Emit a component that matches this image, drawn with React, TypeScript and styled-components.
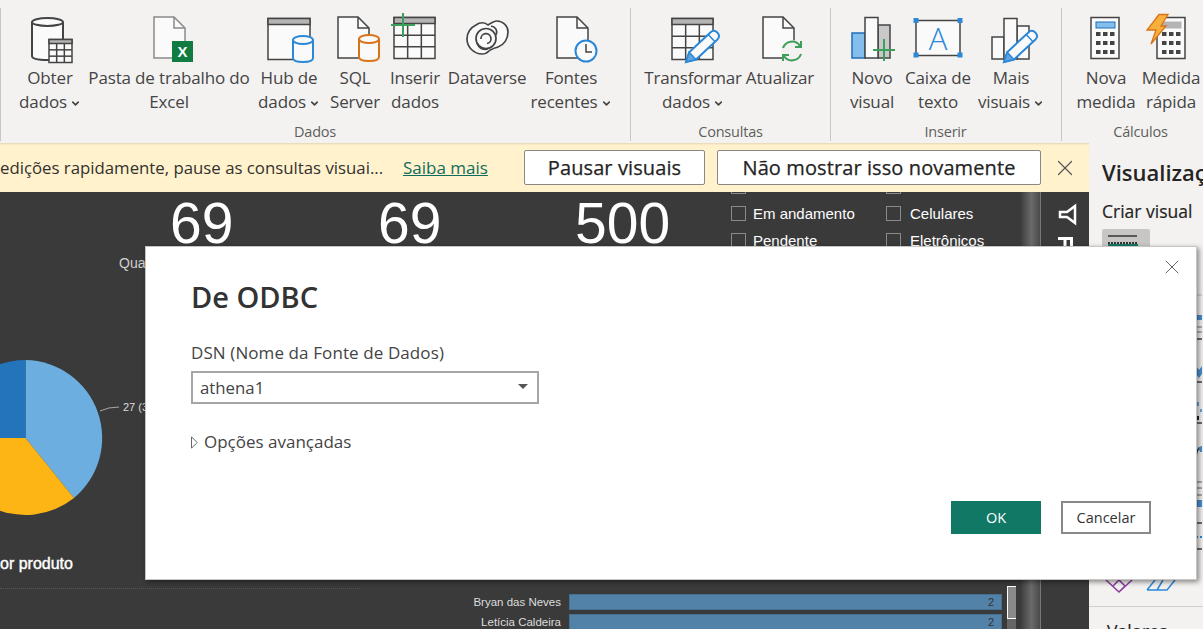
import React from "react";
import styled, { createGlobalStyle } from "styled-components";
import { ChevronDown, X } from "lucide-react";

const INK = "#444";
const PAPER = "#fafafa";
const GREY = "#b4b4b4";
const BLUE = "#2b88d8";

const GlobalStyle = createGlobalStyle`
  html, body {
    margin: 0;
    padding: 0;
    background: #3a3a3a;
  }
  * {
    box-sizing: border-box;
  }
`;

/* small icon parts, coordinates are relative to the ribbon item's centre */
const Doc = ({ x, y = 17, w = 31, h = 41, stroke = INK }: { x: number; y?: number; w?: number; h?: number; stroke?: string }) => (
  <g fill={PAPER} stroke={stroke} strokeWidth="1.5">
    <path d={`M${x} ${y}H${x + w - 11}L${x + w} ${y + 11}V${y + h}H${x}Z`} />
    <path d={`M${x + w - 11} ${y}V${y + 11}H${x + w}`} fill="none" />
  </g>
);

const Cyl = ({ x, y, w, h, color }: { x: number; y: number; w: number; h: number; color: string }) => (
  <g fill={PAPER} stroke={color} strokeWidth="2">
    <path d={`M${x} ${y + 4}V${y + h - 4}Q${x} ${y + h} ${x + w / 2} ${y + h}T${x + w} ${y + h - 4}V${y + 4}`} />
    <ellipse cx={x + w / 2} cy={y + 4} rx={w / 2} ry={4} />
  </g>
);

const Grid = ({ x, y, w, h, cols = 3, rows = 3, bar = 6, sw = 1.5 }: { x: number; y: number; w: number; h: number; cols?: number; rows?: number; bar?: number; sw?: number }) => {
  const cw = w / cols;
  const ch = (h - bar) / rows;
  return (
    <g stroke={INK} strokeWidth={sw} fill={PAPER}>
      <rect x={x} y={y} width={w} height={h} />
      <rect x={x} y={y} width={w} height={bar} fill={GREY} />
      {Array.from({ length: cols - 1 }, (_, i) => (
        <path key={i} d={`M${x + cw * (i + 1)} ${y + bar}V${y + h}`} fill="none" />
      ))}
      {Array.from({ length: rows - 1 }, (_, i) => (
        <path key={i} d={`M${x} ${y + bar + ch * (i + 1)}H${x + w}`} fill="none" />
      ))}
    </g>
  );
};

const Pencil = ({ x, y }: { x: number; y: number }) => (
  <g transform={`translate(${x} ${y}) rotate(-43)`}>
    <path d="M9 -5H38Q43 -5 43 0Q43 5 38 5H9L0 0Z" fill={PAPER} stroke={BLUE} strokeWidth="2" />
    <path d="M9 -5L0 0L9 5Z" fill="#5ea5e0" stroke={BLUE} strokeWidth="1.5" />
    <path d="M35 -5V5" stroke={BLUE} strokeWidth="1.5" />
  </g>
);

const Plus = ({ x, y, r }: { x: number; y: number; r: number }) => (
  <path d={`M${x - r} ${y}H${x + r}M${x} ${y - r}V${y + r}`} stroke="#3c9f5c" strokeWidth="2" fill="none" />
);

const Calc = ({ x, w = 28, screen }: { x: number; w?: number; screen: string }) => (
  <g>
    <rect x={x} y={17.5} width={w} height={41} fill={PAPER} stroke={INK} strokeWidth="1.5" />
    <rect x={x + 5} y={22} width={w - 9} height={6} fill={screen} stroke={screen === GREY ? GREY : "#1e6fb8"} />
    {[32, 41, 50].map((yy) =>
      [5, 12, 19].map((dx) => <rect key={`${yy}-${dx}`} x={x + dx} y={yy} width={4.5} height={4} fill="#444" />)
    )}
  </g>
);

const RIBBON_ICONS: Record<string, React.ReactNode> = {
  obter: (
    <>
      <Cyl x={-18} y={18} w={31} h={42} color={INK} />
      <Grid x={-1} y={39.5} w={23} h={23} bar={4} />
    </>
  ),
  excel: (
    <>
      <Doc x={-15} stroke="#8a8a8a" />
      <rect x={3} y={41} width={21} height={21} fill="#107c41" />
      <text x={13.5} y={57} textAnchor="middle" fontFamily="Liberation Sans" fontWeight="700" fontSize="15" fill="#fff">X</text>
    </>
  ),
  hub: (
    <>
      <rect x={-21} y={18.5} width={42} height={41} fill={PAPER} stroke={INK} strokeWidth="1.5" />
      <rect x={-21} y={18.5} width={42} height={6} fill={GREY} stroke={INK} strokeWidth="1.5" />
      <Cyl x={4} y={36} w={20} h={26} color={BLUE} />
    </>
  ),
  sql: (
    <>
      <Doc x={-17} />
      <Cyl x={4} y={35} w={20} h={26} color="#d9731a" />
    </>
  ),
  inserir: (
    <>
      <Grid x={-21} y={17.5} w={41} h={41} />
      <Plus x={-12} y={25} r={12} />
    </>
  ),
  dataverse: (
    <g fill="none" stroke={INK} strokeWidth="1.7">
      <path
        d="M1 25C-2 22 -7 22 -11 25C-17 28 -20 33 -20 39C-20 47 -13 54 -5 54C-2 54 0 53 2 51C4 49 8 48 11 47C17 45 21 39 21 32C21 26 16 21 10 21C7 21 4 23 1 25Z"
        fill={PAPER}
      />
      <circle cx={-1} cy={38.5} r={10} />
      <path d="M-6 39A5 5 0 1 1 0 43.5" />
      <path d="M9 35C11 31 9 27 4 26" />
      <path d="M-10 43C-8 49 -3 50 1 49" />
    </g>
  ),
  fontes: (
    <>
      <Doc x={-14} />
      <circle cx={15} cy={51} r={10.5} fill={PAPER} stroke={BLUE} strokeWidth="2" />
      <path d="M15 44V52H21" fill="none" stroke={INK} strokeWidth="1.5" />
    </>
  ),
  transformar: (
    <>
      <Grid x={-21} y={18.5} w={41} h={41} />
      <Pencil x={-7} y={62} />
    </>
  ),
  atualizar: (
    <>
      <Doc x={-17} />
      <circle cx={12} cy={51} r={11} fill="#f3f2f1" />
      <path d="M3 48A9.5 9.5 0 0 1 20 46M21 54A9.5 9.5 0 0 1 4 56" fill="none" stroke="#3c9f5c" strokeWidth="2" />
      <path d="M21 41V47H15M3 61V55H9" fill="none" stroke="#3c9f5c" strokeWidth="2" />
    </>
  ),
  novo: (
    <>
      <rect x={6} y={25} width={12} height={33} fill="#c8c8c8" stroke={INK} strokeWidth="1.5" />
      <rect x={-20} y={33} width={13} height={25} fill="#85bdec" stroke="#1e6fb8" strokeWidth="1.5" />
      <rect x={-7} y={17.5} width={13} height={40.5} fill={PAPER} stroke={INK} strokeWidth="1.5" />
      <Plus x={12} y={50} r={11} />
    </>
  ),
  caixa: (
    <>
      <rect x={-22} y={20.5} width={44} height={35} fill={PAPER} stroke={INK} strokeWidth="1.5" />
      {[[-22, 20.5], [22, 20.5], [-22, 55], [22, 55]].map(([cx, cy]) => (
        <rect key={`${cx}-${cy}`} x={cx - 2.5} y={cy - 2.5} width={5} height={5} fill={BLUE} />
      ))}
      <text x={0} y={50} textAnchor="middle" fontFamily="Open Sans" fontWeight="300" fontSize="31" fill={BLUE}>A</text>
    </>
  ),
  mais: (
    <>
      <rect x={-19} y={37} width={12} height={22} fill={PAPER} stroke={INK} strokeWidth="1.5" />
      <rect x={6} y={26} width={12} height={33} fill={PAPER} stroke={INK} strokeWidth="1.5" />
      <rect x={-7} y={18.5} width={13} height={40.5} fill={PAPER} stroke={INK} strokeWidth="1.5" />
      <Pencil x={-7} y={62} />
    </>
  ),
  medida: <Calc x={-15} screen="#85bdec" />,
  rapida: (
    <>
      <Calc x={-14} screen={GREY} />
      <path d="M-12 14.5H-3L-10 26H-5L-20 44L-15 30H-24Z" fill="#f7b03c" stroke="#d9731a" strokeWidth="1.3" />
    </>
  ),
};

type RibbonEntry = { icon: string; width: number; lines: [string, string?]; more?: boolean };
type RibbonSection = { title: string; width: number; pad: number; items: RibbonEntry[] };

const RIBBON: RibbonSection[] = [
  {
    title: "Dados",
    width: 630,
    pad: 14,
    items: [
      { icon: "obter", width: 72, lines: ["Obter", "dados"], more: true },
      { icon: "excel", width: 166, lines: ["Pasta de trabalho do", "Excel"] },
      { icon: "hub", width: 74, lines: ["Hub de", "dados"], more: true },
      { icon: "sql", width: 58, lines: ["SQL", "Server"] },
      { icon: "inserir", width: 62, lines: ["Inserir", "dados"] },
      { icon: "dataverse", width: 82, lines: ["Dataverse"] },
      { icon: "fontes", width: 86, lines: ["Fontes", "recentes"], more: true },
    ],
  },
  {
    title: "Consultas",
    width: 200,
    pad: 15,
    items: [
      { icon: "transformar", width: 96, lines: ["Transformar", "dados"], more: true },
      { icon: "atualizar", width: 78, lines: ["Atualizar"] },
    ],
  },
  {
    title: "Inserir",
    width: 231,
    pad: 14,
    items: [
      { icon: "novo", width: 56, lines: ["Novo", "visual"] },
      { icon: "caixa", width: 76, lines: ["Caixa de", "texto"] },
      { icon: "mais", width: 70, lines: ["Mais", "visuais"], more: true },
    ],
  },
  {
    title: "Cálculos",
    width: 156,
    pad: 17,
    items: [
      { icon: "medida", width: 56, lines: ["Nova", "medida"] },
      { icon: "rapida", width: 74, lines: ["Medida", "rápida"] },
    ],
  },
];

const BARS = [
  { name: "Bryan das Neves", value: 2 },
  { name: "Letícia Caldeira", value: 2 },
];

const App = () => {
  return (
    <Page>
      <GlobalStyle />
      <Ribbon>
        {RIBBON.map((section) => (
          <Group key={section.title} $width={section.width} $pad={section.pad}>
            <GroupItems>
              {section.items.map((item) => (
                <Item key={item.icon} $width={item.width}>
                  <ItemIcon viewBox="-40 12 80 54">{RIBBON_ICONS[item.icon]}</ItemIcon>
                  <ItemLine>{item.lines[0]}</ItemLine>
                  {item.lines[1] && (
                    <ItemLine>
                      {item.lines[1]}
                      {item.more && <ChevronDown size={11} strokeWidth={3.5} />}
                    </ItemLine>
                  )}
                </Item>
              ))}
            </GroupItems>
            <GroupLabel>{section.title}</GroupLabel>
          </Group>
        ))}
      </Ribbon>

      <Body>
        <LeftColumn>
          <Banner>
            <BannerText>edições rapidamente, pause as consultas visuai...</BannerText>
            <BannerLink>Saiba mais</BannerLink>
            <BannerButton $width={181} $margin={36}>Pausar visuais</BannerButton>
            <BannerButton $width={324} $margin={12}>Não mostrar isso novamente</BannerButton>
            <BannerClose>
              <X size={26} strokeWidth={1.1} />
            </BannerClose>
          </Banner>

          <Canvas>
            <KpiValue $left={170}>69</KpiValue>
            <KpiValue $left={378}>69</KpiValue>
            <KpiValue $left={575}>500</KpiValue>
            <KpiCaption>Qua</KpiCaption>

            <Slicer>
              {[
                ["", ""],
                ["Em andamento", "Celulares"],
                ["Pendente", "Eletrônicos"],
              ].map((row, i) => (
                <React.Fragment key={i}>
                  {row.map((label, j) => (
                    <SlicerOption key={j} $gap={j === 0 ? 7 : 9}>
                      <SlicerBox />
                      {label}
                    </SlicerOption>
                  ))}
                </React.Fragment>
              ))}
            </Slicer>

            <PieChart viewBox="0 360 140 160">
              <g transform="translate(0.5 0)">
                <path d="M25 438L25 360A78 78 0 0 1 73.5 498Z" fill="#6caee0" />
                <path d="M25 438L73.5 498A78 78 0 0 1 -53 438Z" fill="#fdb515" />
                <path d="M25 438L-53 438A78 78 0 0 1 25 360Z" fill="#2474bb" />
              </g>
              <path d="M100 411Q108 407 119 407" fill="none" stroke="#aaa" />
            </PieChart>
            <PieLabel>27 (3</PieLabel>
            <ChartTitle>or produto</ChartTitle>
            <DottedRule />

            <BarList>
              {BARS.map((bar) => (
                <BarRow key={bar.name}>
                  <BarName>{bar.name}</BarName>
                  <BarFill>{bar.value}</BarFill>
                </BarRow>
              ))}
            </BarList>
            <BarScrollTrack>
              <BarScrollThumb />
            </BarScrollTrack>

            <PageScroll />
            <SideStrip>
              <svg width="20" height="60" viewBox="0 0 20 60">
                <path d="M17 3V20L9 14H2V9H9Z" fill="#3a3a3a" stroke="#fff" strokeWidth="2.5" />
                <path d="M0 35.5H15M7 35.5V54M13.5 35.5V54" stroke="#fff" strokeWidth="3" fill="none" />
              </svg>
            </SideStrip>
          </Canvas>
        </LeftColumn>

        <Panel>
          <PanelTitle>Visualizações</PanelTitle>
          <PanelSubtitle>Criar visual</PanelSubtitle>
          <PanelThumb>
            <svg width="48" height="20" viewBox="0 0 48 20">
              <path d="M6 7H35" stroke="#333" strokeWidth="1.5" />
              <path d="M6 14H36" stroke="#333" strokeWidth="2" strokeDasharray="2 1" />
              <rect x="6" y="15" width="30" height="5" fill="#117865" />
            </svg>
          </PanelThumb>
          <VisualGallery viewBox="0 292 113 302">
            <path d="M107 295H113" stroke="#bbb" />
            <path d="M107 315H113V320H107Z" fill="#4a90d0" />
            <path d="M107 327H113M107 332H113" stroke="#777" />
            <path d="M107 339H113M107 382H113M107 423H113M107 523H113M107 549H113" stroke="#444" strokeWidth="1.5" />
            <path d="M107 366L110 370L113 366V374L110 378L107 374Z" fill="#4a90d0" />
            <path d="M108 402H110V406H108ZM111 409H113V412H111Z" fill="#6aa5dc" />
            <path d="M107 416H110V420H107Z" fill="#222" />
            <path d="M107 457Q108 447 113 447" fill="none" stroke="#333" strokeWidth="1.5" />
            <path d="M109 447H113V452H111Z" fill="#4a90d0" />
            <path d="M107 482H113M107 488H113M107 495H113" stroke="#666" />
            <path d="M107 500H113V507H107Z" fill="#4a90d0" />
            <path d="M107 537H113" stroke="#2b88d8" strokeWidth="2" strokeDasharray="2 2" />
            <path d="M17 580L30 592L43 580M24 586L30 580L36 586L30 592" fill="none" stroke="#8a3a9e" strokeWidth="1.5" />
            <path d="M58 590H78L86 580M66 580L58 590M74 580L68 590" fill="none" stroke="#2b88d8" strokeWidth="1.5" />
          </VisualGallery>
          <PanelRule />
          <PanelSubtitle $indent={5}>Valores</PanelSubtitle>
        </Panel>
      </Body>

      <Modal>
        <ModalClose>
          <X size={24} strokeWidth={1} />
        </ModalClose>
        <ModalTitle>De ODBC</ModalTitle>
        <FieldLabel>DSN (Nome da Fonte de Dados)</FieldLabel>
        <SelectBox>
          athena1
          <SelectCaret />
        </SelectBox>
        <Advanced>
          <svg width="7" height="13" viewBox="0 0 7 13">
            <path d="M.5.8L6.2 6.5L.5 12.2Z" fill="none" stroke="#666" />
          </svg>
          Opções avançadas
        </Advanced>
        <ModalFooter>
          <DialogButton $primary>OK</DialogButton>
          <DialogButton>Cancelar</DialogButton>
        </ModalFooter>
      </Modal>
    </Page>
  );
};

const Page = styled.div`
  position: relative;
  width: 1203px;
  height: 629px;
  overflow: hidden;
  display: flex;
  flex-direction: column;
  font-family: "Open Sans", "Noto Sans", sans-serif;
  color: #333;
`;

const Ribbon = styled.div`
  height: 143px;
  flex: none;
  display: flex;
  padding: 8px 0 2px;
  background: #f3f2f1;
`;

const Group = styled.div<{ $width: number; $pad: number }>`
  flex: none;
  width: ${(p) => p.$width}px;
  padding-left: ${(p) => p.$pad - 1}px;
  border-left: 1px solid #c8c6c4;
  display: flex;
  flex-direction: column;
`;

const GroupItems = styled.div`
  display: flex;
  flex: 1;
`;

const Item = styled.div<{ $width: number }>`
  flex: none;
  width: ${(p) => p.$width}px;
  padding-top: 4px;
  display: flex;
  flex-direction: column;
  align-items: center;
`;

const ItemIcon = styled.svg`
  flex: none;
  width: 80px;
  height: 54px;
  overflow: visible;
`;

const ItemLine = styled.div`
  height: 24px;
  line-height: 24px;
  font-size: 17px;
  letter-spacing: -0.15px;
  white-space: nowrap;
  color: #444;

  svg {
    margin-left: 3px;
    vertical-align: -1px;
  }
`;

const GroupLabel = styled.div`
  align-self: stretch;
  text-align: center;
  transform: translateX(-7px);
  line-height: 18px;
  font-size: 14.5px;
  letter-spacing: -0.2px;
  color: #605e5c;
`;

const Body = styled.div`
  flex: 1;
  min-height: 0;
  display: flex;
`;

const LeftColumn = styled.div`
  flex: none;
  width: 1089px;
  display: flex;
  flex-direction: column;
`;

const Banner = styled.div`
  height: 49px;
  flex: none;
  display: flex;
  align-items: center;
  background: #fff2cc;
  box-shadow: inset 0 2px 2px -1px rgba(0, 0, 0, 0.12);
`;

const BannerText = styled.span`
  flex: none;
  width: 384px;
  font-size: 16.8px;
  white-space: nowrap;
  color: #323130;
`;

const BannerLink = styled.a`
  margin-left: 19px;
  width: 85px;
  flex: none;
  font-size: 17px;
  color: #0f6b5c;
  text-decoration: underline;
  white-space: nowrap;
`;

const BannerButton = styled.button<{ $width: number; $margin: number }>`
  flex: none;
  width: ${(p) => p.$width}px;
  height: 35px;
  margin-left: ${(p) => p.$margin}px;
  padding: 0;
  background: #fff;
  border: 1px solid #8a8886;
  border-radius: 2px;
  font-family: inherit;
  font-size: 20px;
  letter-spacing: 0.1px;
  -webkit-text-stroke: 0.25px #252423;
  color: #252423;
`;

const BannerClose = styled.span`
  margin-left: 11px;
  display: flex;
  color: #555;
`;

const Canvas = styled.div`
  position: relative;
  flex: 1;
  overflow: hidden;
  background: #3a3a3a;
  font-family: "Liberation Sans", Arial, sans-serif;
`;

const KpiValue = styled.div<{ $left: number }>`
  position: absolute;
  left: ${(p) => p.$left}px;
  top: -1px;
  font-size: 57px;
  line-height: 64px;
  color: #fff;
`;

const KpiCaption = styled.div`
  position: absolute;
  left: 119px;
  top: 63px;
  font-size: 14px;
  color: #d0d0d0;
`;

const Slicer = styled.div`
  position: absolute;
  left: 731px;
  top: -19px;
  display: grid;
  grid-template-columns: 155px 130px;
  grid-auto-rows: 27px;
`;

const SlicerOption = styled.div<{ $gap: number }>`
  display: flex;
  align-items: center;
  gap: ${(p) => p.$gap}px;
  font-size: 15px;
  color: #fff;
`;

const SlicerBox = styled.span`
  flex: none;
  width: 15px;
  height: 15px;
  border: 1px solid #8a8a8a;
`;

const PieChart = styled.svg`
  position: absolute;
  left: 0;
  top: 168px;
  width: 140px;
  height: 160px;
`;

const PieLabel = styled.div`
  position: absolute;
  left: 123px;
  top: 209px;
  font-size: 11px;
  color: #ddd;
`;

const ChartTitle = styled.div`
  position: absolute;
  left: 0;
  top: 363px;
  font-size: 16px;
  color: #fff;
  -webkit-text-stroke: 0.4px #fff;
`;

const DottedRule = styled.div`
  position: absolute;
  left: 0;
  top: 396px;
  width: 360px;
  border-top: 1px dotted #555;
`;

const BarList = styled.div`
  position: absolute;
  left: 400px;
  top: 402px;
  display: flex;
  flex-direction: column;
  gap: 4px;
`;

const BarRow = styled.div`
  display: flex;
  align-items: center;
  gap: 8px;
`;

const BarName = styled.span`
  width: 161px;
  text-align: right;
  font-size: 11.5px;
  color: #ddd;
`;

const BarFill = styled.div`
  width: 433px;
  height: 16px;
  padding-right: 7px;
  text-align: right;
  font-size: 11px;
  line-height: 15px;
  color: #333;
  background: #5282a8;
  border: 1px solid #466f90;
`;

const BarScrollTrack = styled.div`
  position: absolute;
  left: 1007px;
  top: 394px;
  bottom: 0;
  width: 9px;
  background: #666;
`;

const BarScrollThumb = styled.div`
  height: 33px;
  background: #8a8a8a;
  border: 1px solid #fff;
  border-right: none;
`;

const PageScroll = styled.div`
  position: absolute;
  left: 1021px;
  top: 0;
  bottom: 0;
  width: 20px;
  background: linear-gradient(90deg, #3f3f3f, #6a6a6a 55%, #4a4a4a);
  border-right: 1px solid #777;
`;

const SideStrip = styled.div`
  position: absolute;
  left: 1058px;
  top: 11px;
`;

const Panel = styled.div`
  position: relative;
  flex: 1;
  padding: 15px 0 0 13px;
  background: #f3f2f1;
  overflow: hidden;
`;

const PanelTitle = styled.div`
  font-size: 22px;
  line-height: 28px;
  font-weight: 600;
  white-space: nowrap;
  color: #252423;
`;

const PanelSubtitle = styled.div<{ $indent?: number }>`
  margin-top: ${(p) => (p.$indent ? 13 : 14)}px;
  margin-left: ${(p) => p.$indent ?? 0}px;
  font-size: 17.5px;
  line-height: 22px;
  white-space: nowrap;
  -webkit-text-stroke: 0.2px #252423;
  color: #252423;
`;

const PanelThumb = styled.div`
  width: 48px;
  height: 40px;
  margin-top: 7px;
  background: #c8c6c4;
  border-radius: 2px;
  line-height: 0;
`;

const VisualGallery = styled.svg`
  display: block;
  width: 113px;
  height: 302px;
  margin: 23px 0 0 -13px;
`;

const PanelRule = styled.div`
  margin: 12px 0 0 -13px;
  border-top: 1px solid #d2d0ce;
`;

const Modal = styled.div`
  position: absolute;
  left: 145px;
  top: 246px;
  width: 1052px;
  height: 334px;
  padding: 30px 45px 0;
  background: #fff;
  border: 1px solid #c8c6c4;
  box-shadow: 2px 2px 5px rgba(0, 0, 0, 0.45);
  display: flex;
  flex-direction: column;
`;

const ModalClose = styled.span`
  position: absolute;
  top: 8px;
  right: 12px;
  display: flex;
  color: #666;
`;

const ModalTitle = styled.h1`
  margin: 0;
  font-size: 29px;
  line-height: 40px;
  font-weight: 600;
  color: #333;
`;

const FieldLabel = styled.div`
  margin-top: 25px;
  font-size: 17px;
  line-height: 22px;
  letter-spacing: 0.1px;
  color: #444;
`;

const SelectBox = styled.div`
  position: relative;
  width: 348px;
  height: 33px;
  margin-top: 7px;
  padding-left: 7px;
  border: 2px solid #a6a6a6;
  font-size: 16.8px;
  line-height: 29px;
  color: #444;
`;

const SelectCaret = styled.span`
  position: absolute;
  right: 9px;
  top: 11px;
  border-left: 5px solid transparent;
  border-right: 5px solid transparent;
  border-top: 5px solid #555;
`;

const Advanced = styled.div`
  margin-top: 26px;
  display: flex;
  align-items: center;
  gap: 6px;
  font-size: 17px;
  line-height: 24px;
  color: #444;
`;

const ModalFooter = styled.div`
  margin-top: 47px;
  display: flex;
  justify-content: flex-end;
  gap: 20px;
`;

const DialogButton = styled.button<{ $primary?: boolean }>`
  width: 90px;
  height: 33px;
  padding: 0;
  font-family: inherit;
  font-size: 14.5px;
  background: ${(p) => (p.$primary ? "#117865" : "#fff")};
  color: ${(p) => (p.$primary ? "#fff" : "#333")};
  border: ${(p) => (p.$primary ? "none" : "2px solid #8a8886")};
`;

export default App;
